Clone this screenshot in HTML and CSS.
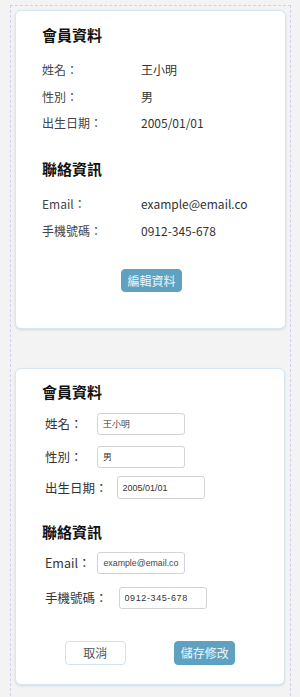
FILE: index.html
```html
<!DOCTYPE html>
<html lang="zh-Hant">
<head>
<meta charset="utf-8">
<title>會員資料</title>
<link rel="stylesheet" href="styles.css">
</head>
<body>
<div class="frame">
  <section class="card card-view">
    <h2 class="card-title">會員資料</h2>
    <div class="info-row"><span class="info-label">姓名：</span><span class="info-value">王小明</span></div>
    <div class="info-row"><span class="info-label">性別：</span><span class="info-value">男</span></div>
    <div class="info-row"><span class="info-label">出生日期：</span><span class="info-value">2005/01/01</span></div>
    <h2 class="card-title section-title">聯絡資訊</h2>
    <div class="info-row"><span class="info-label">Email：</span><span class="info-value">example@email.co</span></div>
    <div class="info-row"><span class="info-label">手機號碼：</span><span class="info-value">0912-345-678</span></div>
    <div class="view-actions"><button class="btn btn-primary" type="button">編輯資料</button></div>
  </section>

  <section class="card card-edit">
    <h2 class="card-title">會員資料</h2>
    <div class="form-row row-name"><label class="form-label">姓名：</label><input class="form-input gap-name" type="text" value="王小明"></div>
    <div class="form-row row-gender"><label class="form-label">性別：</label><input class="form-input gap-name" type="text" value="男"></div>
    <div class="form-row row-birth"><label class="form-label">出生日期：</label><input class="form-input gap-birth" type="text" value="2005/01/01"></div>
    <h2 class="card-title section-title-edit">聯絡資訊</h2>
    <div class="form-row row-email"><label class="form-label">Email：</label><input class="form-input input-email gap-email" type="text" value="example@email.co"></div>
    <div class="form-row row-phone"><label class="form-label">手機號碼：</label><input class="form-input input-phone gap-phone" type="text" value="0912-345-678"></div>
    <div class="edit-actions">
      <button class="btn btn-outline" type="button">取消</button>
      <button class="btn btn-primary btn-lg" type="button">儲存修改</button>
    </div>
  </section>
</div>
</body>
</html>
```
FILE: styles.css
```css
* { box-sizing: border-box; }

html, body {
  margin: 0;
  padding: 0;
  background: #f3f3f3;
  font-family: "Noto Sans CJK TC", "Noto Sans", sans-serif;
  color: #333;
}

.frame {
  margin: 5px 9px 0 10px;
  border: 1px dashed #d9c9f3;
  padding: 4px 4px 30px 4px;
}

.card {
  background: #fff;
  border: 1px solid #d5e7f2;
  border-radius: 6px;
  box-shadow: 0 1px 2px rgba(120, 140, 160, 0.25);
}

.card-view {
  height: 319px;
  padding: 14px 24px 0 26px;
}

.card-edit {
  margin-top: 39px;
  margin-right: 1px;
  height: 317px;
  padding: 13px 20px 0 26px;
}

.card-title {
  margin: 0;
  font-size: 15px;
  line-height: 20px;
  font-weight: 700;
  color: #111;
}

.section-title {
  margin-top: 22.5px;
  margin-bottom: 12px;
}

.info-row {
  display: flex;
  font-size: 12px;
  line-height: 26.5px;
  color: #333;
}

.card-title + .info-row { margin-top: 12px; }
.section-title + .info-row { margin-top: 0; }

.info-label {
  width: 99px;
  flex: none;
  color: #444;
}

.info-value { color: #333; }

.view-actions {
  display: flex;
  justify-content: center;
  margin-top: 25px;
}

.btn {
  font-family: "Noto Sans CJK TC", "Noto Sans", sans-serif;
  width: 61px;
  height: 23px;
  padding: 0;
  border-radius: 4px;
  font-size: 12px;
  line-height: 1;
  cursor: pointer;
}

.btn-primary {
  background: #5fa1c1;
  border: 1px solid #5fa1c1;
  color: #eef5f9;
}

.btn-lg { height: 24px; }

.btn-outline {
  height: 24px;
  background: #fff;
  border: 1px solid #cfe4f0;
  color: #555;
}

.form-row {
  display: flex;
  align-items: center;
  padding-left: 3px;
  margin-top: 11px;
}

.form-row.row-birth { margin-top: 8px; }
.form-row.row-email { margin-top: 10px; }
.form-row.row-phone { margin-top: 13px; }

.form-label {
  font-size: 12.5px;
  color: #333;
  line-height: 20px;
}

.form-input {
  width: 88px;
  height: 22px;
  border: 1px solid #d3d3d3;
  border-radius: 3px;
  padding: 0 2px 0 5px;
  font-family: "Liberation Sans", Arial, sans-serif;
  font-size: 9px;
  color: #333;
  background: #fff;
}

.input-email { font-size: 8.8px; color: #444; }
.input-phone { letter-spacing: 0.6px; }

.row-birth .form-input { height: 23px; }

.gap-name { margin-left: 14px; }
.gap-birth { margin-left: 9px; }
.gap-email { margin-left: 7px; }
.gap-phone { margin-left: 11px; }

.section-title-edit {
  margin-top: 23px;
}

.edit-actions {
  display: flex;
  justify-content: space-evenly;
  margin: 32px -20px 0 -26px;
}
```
